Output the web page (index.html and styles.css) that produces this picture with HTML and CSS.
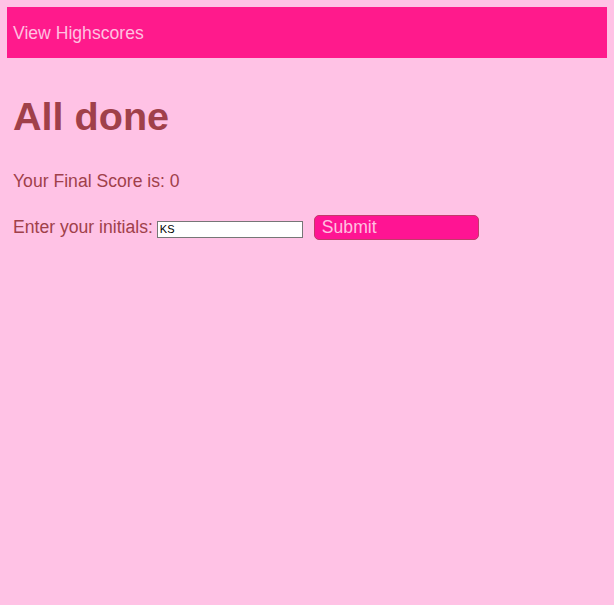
FILE: index.html
```html
<!DOCTYPE html>
<html>
<head>
<meta charset="utf-8">
<link rel="stylesheet" href="styles.css">
</head>
<body>
<header class="topbar"><a class="hs-link">View Highscores</a></header>
<main class="content">
<h1 class="title">All done</h1>
<p class="score">Your Final Score is: 0</p>
<form class="initials-row">
<label class="initials-label">Enter your initials:</label>
<input class="initials-input" type="text" value="KS">
<button class="submit-btn" type="button">Submit</button>
</form>
</main>
</body>
</html>
```
FILE: styles.css
```css
html, body {
  margin: 0;
  padding: 0;
  background: #ffc2e5;
}
body {
  padding: 7px;
  font-family: "Liberation Sans", Arial, sans-serif;
  color: #a0404a;
}
.topbar {
  background: #ff1a8c;
  height: 51px;
  width: 600px;
  display: flex;
  align-items: center;
  padding-left: 6px;
  padding-top: 2px;
  box-sizing: border-box;
}
.hs-link {
  color: #ffc0e0;
  font-size: 17.6px;
}
.content {
  padding-left: 6px;
}
.title {
  font-size: 39.6px;
  font-weight: bold;
  margin: 35px 0 0 0;
  line-height: 46px;
}
.score {
  font-size: 17.6px;
  margin: 32px 0 0 0;
  line-height: 20px;
}
.initials-row {
  display: flex;
  align-items: baseline;
  margin-top: 24px;
}
.initials-label {
  font-size: 17.6px;
  margin-right: 4px;
}
.initials-input {
  width: 146px;
  height: 17px;
  box-sizing: border-box;
  border: 1px solid #767676;
  font-family: "Liberation Sans", Arial, sans-serif;
  font-size: 11px;
  padding: 0 2px;
  background: #fff;
  color: #000;
}
.submit-btn {
  margin-left: 11px;
  width: 165px;
  height: 25px;
  box-sizing: border-box;
  background: #ff1493;
  border: 1px solid #c23a6a;
  border-radius: 5px;
  color: #ffc0e0;
  font-family: "Liberation Sans", Arial, sans-serif;
  font-size: 17.6px;
  text-align: left;
  padding: 0 7px;
}
```
